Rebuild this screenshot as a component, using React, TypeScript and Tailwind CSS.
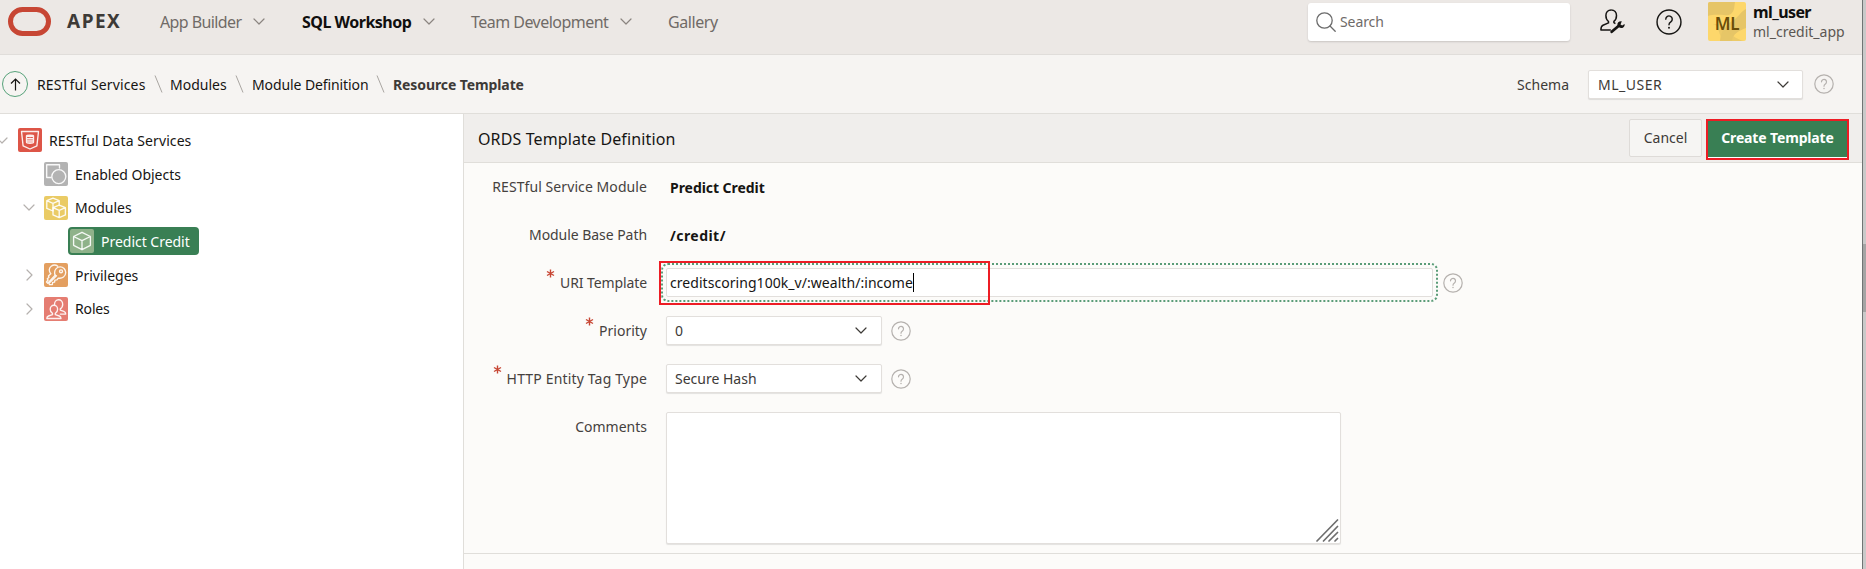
import React from "react";
import type { ReactNode } from "react";

function Chevron({ className = "", dir = "down" }: { className?: string; dir?: "down" | "right" }) {
  return (
    <svg
      className={`shrink-0 ${className}`}
      width={dir === "down" ? 12 : 7}
      height={dir === "down" ? 7 : 12}
      viewBox={dir === "down" ? "0 0 12 7" : "0 0 7 12"}
      fill="none"
      stroke="currentColor"
      strokeWidth="1.2"
      strokeLinecap="round"
      strokeLinejoin="round"
    >
      <path d={dir === "down" ? "M1 1 6 6 11 1" : "M1 1 6 6 1 11"} />
    </svg>
  );
}

function Help({ size, className = "", strokeWidth = 1.2 }: { size: number; className?: string; strokeWidth?: number }) {
  return (
    <svg className={`shrink-0 ${className}`} width={size} height={size} viewBox="0 0 20 20" fill="none" stroke="currentColor" strokeWidth={strokeWidth}>
      <circle cx="10" cy="10" r="9.2" />
      <path d="M7.5 7.8a2.5 2.5 0 1 1 3.9 2.1c-.9.6-1.4 1-1.4 2.3" strokeLinecap="round" />
      <circle cx="10" cy="14.4" r=".75" fill="currentColor" stroke="none" />
    </svg>
  );
}

function Slash() {
  return (
    <svg className="shrink-0" width="9" height="18" viewBox="0 0 9 18" fill="none" stroke="#a9a5a1" strokeWidth="1">
      <path d="M1 .5 8 17.5" />
    </svg>
  );
}

function Tile({ color, children }: { color: string; children: ReactNode }) {
  return (
    <svg
      className={`shrink-0 rounded-[2px] ${color}`}
      width="24"
      height="24"
      viewBox="0 0 24 24"
      fill="none"
      stroke="#ffffff"
      strokeOpacity=".9"
      strokeWidth="1.35"
      strokeLinejoin="round"
      strokeLinecap="round"
    >
      {children}
    </svg>
  );
}

function Header() {
  return (
    <header className="h-[55px] border-b border-[#e0ddda] bg-[#ece8e5]">
      <div className="flex h-[43px] items-center text-[16px] text-[#706b67]">
        <div className="ml-[8px] h-[29px] w-[43px] rounded-full border-[5px] border-[#c74634]" />
        <div className="ml-[16px] w-[93px] text-[19px] font-bold tracking-[1.5px] text-[#3d3a37]">APEX</div>
        <div className="w-[93px] tracking-[-0.6px]">App Builder</div>
        <Chevron className="text-[#8b8580]" />
        <div className="ml-[37px] w-[121px] font-bold tracking-[-0.5px] text-[#100f0e]">SQL Workshop</div>
        <Chevron className="text-[#8b8580]" />
        <div className="ml-[36px] w-[149px] tracking-[-0.53px]">Team Development</div>
        <Chevron className="text-[#8b8580]" />
        <div className="ml-[36px] tracking-[-0.43px]">Gallery</div>
        <div className="ml-auto flex h-[38px] w-[262px] items-center rounded-[3px] bg-white shadow-[0_1px_2px_rgba(0,0,0,0.15)]">
          <svg className="ml-[8px]" width="20" height="20" viewBox="0 0 20 20" fill="none" stroke="#6b6b6b" strokeWidth="1.3" strokeLinecap="round">
            <circle cx="8.5" cy="8.5" r="7.7" />
            <path d="m14 14 5.2 5.2" />
          </svg>
          <span className="ml-[4px] text-[14px] tracking-[-0.1px] text-[#6f6b68]">Search</span>
        </div>
        <svg className="ml-[30px]" width="25" height="25" viewBox="0 0 25 25" fill="none" stroke="#161513" strokeWidth="1.5" strokeLinejoin="round">
          <path d="M11.2.9c-3.2 0-5.3 2.4-5.3 5.6 0 2.6 1 4.8 2.6 6v1.4L3 16.3C1.500 17 .9 18.500.9 20.900h9.900" />
          <path d="M11.200.9c3.200 0 5.300 2.400 5.300 5.600 0 2.500-1 4.700-2.600 5.900v1.300l1.500.9" />
          <path d="M11.700 22.800 18.500 17" strokeWidth="2.800" strokeLinecap="round" />
          <path d="M21.800 12.200c-2.600-.4-4.700 1.300-4.400 3.900.3 2.400 3.700 3.700 5.800 2.400 1.200-.8 1.600-2 1.400-3.500l-2.400 1.400-1.700-1z" fill="#161513" stroke="none" />
        </svg>
        <Help size={26} strokeWidth={1.1} className="ml-[31px] text-[#161513]" />
        <div className="relative ml-[26px] flex h-[39px] w-[38px] items-center justify-center overflow-hidden rounded-[2px] bg-[#fdd76b] text-[17px] font-semibold tracking-[-0.2px] text-[#694d09]">
          <svg className="absolute inset-0" width="38" height="39" viewBox="0 0 38 39" fill="#e6c567">
            <path d="M0 0H27C26 5 27 8 23 12C19 15 9 11 0 14Z" />
            <path d="M38 7C33 9 31 15 24 19C16 24 13 30 12 39H24C25 31 31 29 38 26Z" />
            <path d="M5 22C11 23 10 31 15 39H35C25 36 16 27 13 22Z" fillOpacity=".75" />
          </svg>
          <span className="relative pt-[4px]">ML</span>
        </div>
        <div className="ml-[7px] w-[109px]">
          <div className="text-[16px] font-bold leading-[20px] tracking-[-0.6px] text-[#100f0e]">ml_user</div>
          <div className="text-[14px] leading-[20px] text-[#5b5652]">ml_credit_app</div>
        </div>
      </div>
    </header>
  );
}

function Breadcrumbs() {
  return (
    <div className="flex h-[59px] items-center border-b border-[#e0deda] bg-[#f6f4f2] text-[14px] text-[#161513]">
      <div className="ml-[2px] flex size-[26px] items-center justify-center rounded-full border border-[#56a27a]">
        <svg width="11" height="13" viewBox="0 0 11 13" fill="none" stroke="#161513" strokeWidth="1.2">
          <path d="M5.500 12.500V1M1 5.500 5.500 1 10 5.500" />
        </svg>
      </div>
      <div className="ml-[9px] w-[117px] tracking-[0.15px]">RESTful Services</div>
      <Slash />
      <div className="ml-[7px] w-[65px]">Modules</div>
      <Slash />
      <div className="ml-[8px] w-[124px] tracking-[-0.1px]">Module Definition</div>
      <Slash />
      <div className="ml-[8px] font-bold tracking-[-0.1px] text-[#3d3a37]">Resource Template</div>
      <div className="ml-auto mr-[19px] text-[#3d3a37]">Schema</div>
      <Select className="w-[215px] pl-[9px] pr-[13px] tracking-[0.5px]">ML_USER</Select>
      <Help size={20} className="ml-[11px] mr-[28px] text-[#b5b1ae]" />
    </div>
  );
}

function Select({ children, className }: { children: ReactNode; className: string }) {
  return (
    <div className={`flex h-[29px] items-center justify-between rounded-[2px] border border-[#e2dfdc] bg-white text-[14px] text-[#3d3a37] shadow-[0_1px_1px_rgba(0,0,0,0.1)] ${className}`}>
      <span>{children}</span>
      <Chevron className="text-[#3d3a37]" />
    </div>
  );
}

const cube = "M12 3.300 20.400 7.500V16.300L12 20.700 3.600 16.300V7.500ZM3.600 7.500 12 11.700 20.400 7.500M12 11.700V20.700";

function Tree() {
  return (
    <nav className="w-[463px] shrink-0 overflow-hidden bg-white pt-[9px] text-[14px] text-[#161513]">
      <div className="flex h-[34px] items-center">
        <Chevron className="ml-[-4px] mr-[10px] text-[#b5b1ae]" />
        <Tile color="bg-[#dd5547]">
          <path d="M3.500 3.500h17l-1.600 14.300L12 21l-6.900-3.200z" />
          <path d="M8.500 7.800c0-1 7-1 7 0v6.500c0 1.200-7 1.200-7 0zM8.500 7.800c0 1 7 1 7 0M8.500 10c0 1.100 7 1.100 7 0M8.500 12.200c0 1.100 7 1.100 7 0" />
        </Tile>
        <span className="ml-[7px] tracking-[0.08px]">RESTful Data Services</span>
      </div>
      <div className="flex h-[34px] items-center">
        <span className="w-[44px]" />
        <Tile color="bg-[#b3b3b3]">
          <path d="M7 15.500H2.700V2.700h12.800V6" />
          <circle cx="14.800" cy="14.600" r="7" />
        </Tile>
        <span className="ml-[7px] tracking-[-0.02px]">Enabled Objects</span>
      </div>
      <div className="flex h-[33px] items-center">
        <Chevron className="ml-[23px] mr-[9px] text-[#b5b1ae]" />
        <Tile color="bg-[#eacb65]">
          <path d="M9 2.200 15.200 4.700V9.500M9 15 2.800 12.400V4.700L9 2.200M2.800 4.700 9 7.300 15.200 4.700M9 7.300V15" />
          <path d="M15.200 9.200 21.400 11.700V18.900L15.200 21.600 9 18.900V11.700ZM9 11.700 15.200 14.300 21.400 11.700M15.200 14.300V21.600" />
        </Tile>
        <span className="ml-[7px]">Modules</span>
      </div>
      <div className="flex h-[34px] items-center">
        <div className="ml-[68px] flex h-[28px] w-[131px] items-center rounded-[4px] bg-[#397f54] pl-[2px] text-white">
          <Tile color="bg-[#8fb28a]">
            <path d={cube} />
          </Tile>
          <span className="ml-[7px] tracking-[-0.02px]">Predict Credit</span>
        </div>
      </div>
      <div className="flex h-[34px] items-center">
        <Chevron dir="right" className="ml-[26px] mr-[11px] text-[#b5b1ae]" />
        <Tile color="bg-[#e39f60]">
          <path d="M12.500 12.800 4.800 20.500l.8 1.200 2.800-.2.200-2.100 2-.2.300-2 2-.3 1.400-1.800c4 .8 7.400-1.800 7.400-5.500 0-3.200-2.500-5.700-5.500-5.700-3.300 0-5.600 2.700-5.600 5.500 0 1.200.2 2 .6 2.700" />
          <path d="M11.200 12.300 3.700 20.200 2.500 19l1.600-2-.8-1.200 1.700-1.500-.6-1.300 2.400-2.200C4.500 8 5 5 7.200 3.300c2-1.500 4.600-1.600 6.600-.1" />
          <circle cx="17" cy="8.300" r="1.500" />
        </Tile>
        <span className="ml-[7px]">Privileges</span>
      </div>
      <div className="flex h-[33px] items-center">
        <Chevron dir="right" className="ml-[26px] mr-[11px] text-[#b5b1ae]" />
        <Tile color="bg-[#e57d72]">
          <path d="M9.900 8.200c-2.100 0-3.700 1.800-3.700 4 0 1.900 1 3.500 2.300 4.200v1.300l-4 1.300c-1.300.5-1.700 1.300-1.700 2.500h14.200c0-1.200-.4-2-1.700-2.500l-4-1.300v-1.300c1.300-.7 2.300-2.300 2.300-4.200 0-2.200-1.600-4-3.700-4z" />
          <path d="M10.500 7.500c0-2.700 1.700-4.800 4-4.800 2.400 0 4.200 1.900 4.200 4.500 0 2-1 3.800-2.400 4.600v1.300l3.500 1.300c1.300.5 1.900 1.400 1.900 2.700h-5.400" />
        </Tile>
        <span className="ml-[7px] tracking-[-0.15px]">Roles</span>
      </div>
    </nav>
  );
}

function Row({ label, required, tall, labelClass = "", children }: { label: string; required?: boolean; tall?: boolean; labelClass?: string; children: ReactNode }) {
  return (
    <div className={tall ? "flex h-[150px]" : "flex h-[48px] items-center"}>
      <div className={tall ? "mt-[14px] flex h-[20px] w-[183px] justify-end leading-[20px]" : "flex h-[20px] w-[183px] justify-end leading-[20px]"}>
        {required && (
          <svg className="mr-[5px] mt-[-4px]" width="9" height="9" viewBox="0 0 9 9" stroke="#c74634" strokeWidth="1.400">
            <path d="M4.500.5v8M1 2.500l7 4M8 2.500l-7 4" />
          </svg>
        )}
        <span className={labelClass}>{label}</span>
      </div>
      <div className={tall ? "ml-[19px] pt-[9px]" : "ml-[19px] flex items-center"}>{children}</div>
    </div>
  );
}

function Editor() {
  return (
    <main className="min-w-0 flex-1 border-l border-[#e0deda] bg-[#fcfbf9] text-[14px] text-[#45413e]">
      <div className="flex h-[49px] items-center border-b border-[#e0deda] bg-[#f0eeec]">
        <h1 className="ml-[14px] pt-[2px] text-[16px] tracking-[0.12px] text-[#161513]">ORDS Template Definition</h1>
        <button className="ml-auto h-[38px] w-[73px] rounded-[2px] border border-[#dedbd8] bg-[#f6f5f3] pb-[1px] text-[#3d3a37]">Cancel</button>
        <div className="ml-[4px] mr-[13px] mt-[3px] h-[41px] w-[143px] border-2 border-[#ed1c24] bg-white">
          <button className="h-[36px] w-full bg-[#397f54] pb-[3px] font-bold tracking-[-0.15px] text-white">Create Template</button>
        </div>
      </div>
      <div className="h-[391px] border-b border-[#e0deda]">
        <Row label="RESTful Service Module" labelClass="tracking-[0.08px]">
          <span className="ml-[4px] font-bold tracking-[-0.05px] text-[#161513]">Predict Credit</span>
        </Row>
        <Row label="Module Base Path" labelClass="tracking-[-0.05px]">
          <span className="ml-[4px] font-bold tracking-[0.45px] text-[#161513]">/credit/</span>
        </Row>
        <Row label="URI Template" required labelClass="tracking-[-0.1px]">
          <div className="relative mt-[-1px] flex h-[29px] w-[767px] items-center rounded-[2px] border border-[#e2dfdc] bg-white pl-[3px] text-[#161513] outline-2 outline-offset-3 outline-dotted outline-[#5a9c78]">
            <span className="tracking-[0.05px]">creditscoring100k_v/:wealth/:income</span>
            <span className="h-[19px] w-px bg-black" />
            <div className="absolute left-[-8px] top-[-8px] h-[44px] w-[331px] border-2 border-[#ed1c24]" />
          </div>
          <Help size={20} className="ml-[10px] text-[#b5b1ae]" />
        </Row>
        <Row label="Priority" required>
          <Select className="mt-[-1px] w-[216px] pl-[8px] pr-[14px]">0</Select>
          <Help size={20} className="ml-[9px] text-[#b5b1ae]" />
        </Row>
        <Row label="HTTP Entity Tag Type" required labelClass="tracking-[0.16px]">
          <Select className="mt-[-1px] w-[216px] pl-[8px] pr-[14px]">Secure Hash</Select>
          <Help size={20} className="ml-[9px] text-[#b5b1ae]" />
        </Row>
        <Row label="Comments" tall>
          <div className="flex h-[132px] w-[675px] items-end justify-end rounded-[2px] border border-[#e2dfdc] bg-white shadow-[0_1px_1px_rgba(0,0,0,0.1)]">
            <svg width="24" height="24" viewBox="0 0 24 24" stroke="#6e6e6e" strokeWidth="1.700" strokeLinecap="round">
              <path d="M1 22 21.500 1M7.500 22 21.500 7.500M13 22l8.500-8.500M19 22l2.500-2.500" />
            </svg>
          </div>
        </Row>
      </div>
    </main>
  );
}

export default function App() {
  return (
    <div className="flex h-[569px] w-[1866px] overflow-hidden whitespace-nowrap font-['Noto_Sans',sans-serif]">
      <div className="flex w-[1862px] flex-col">
        <Header />
        <Breadcrumbs />
        <div className="flex min-h-0 flex-1">
          <Tree />
          <Editor />
        </div>
      </div>
      <div className="w-[4px] border-l border-[#707474] bg-[#c9c9c9] pt-[244px]">
        <div className="h-[68px] bg-[#a4a4a4]" />
      </div>
    </div>
  );
}
